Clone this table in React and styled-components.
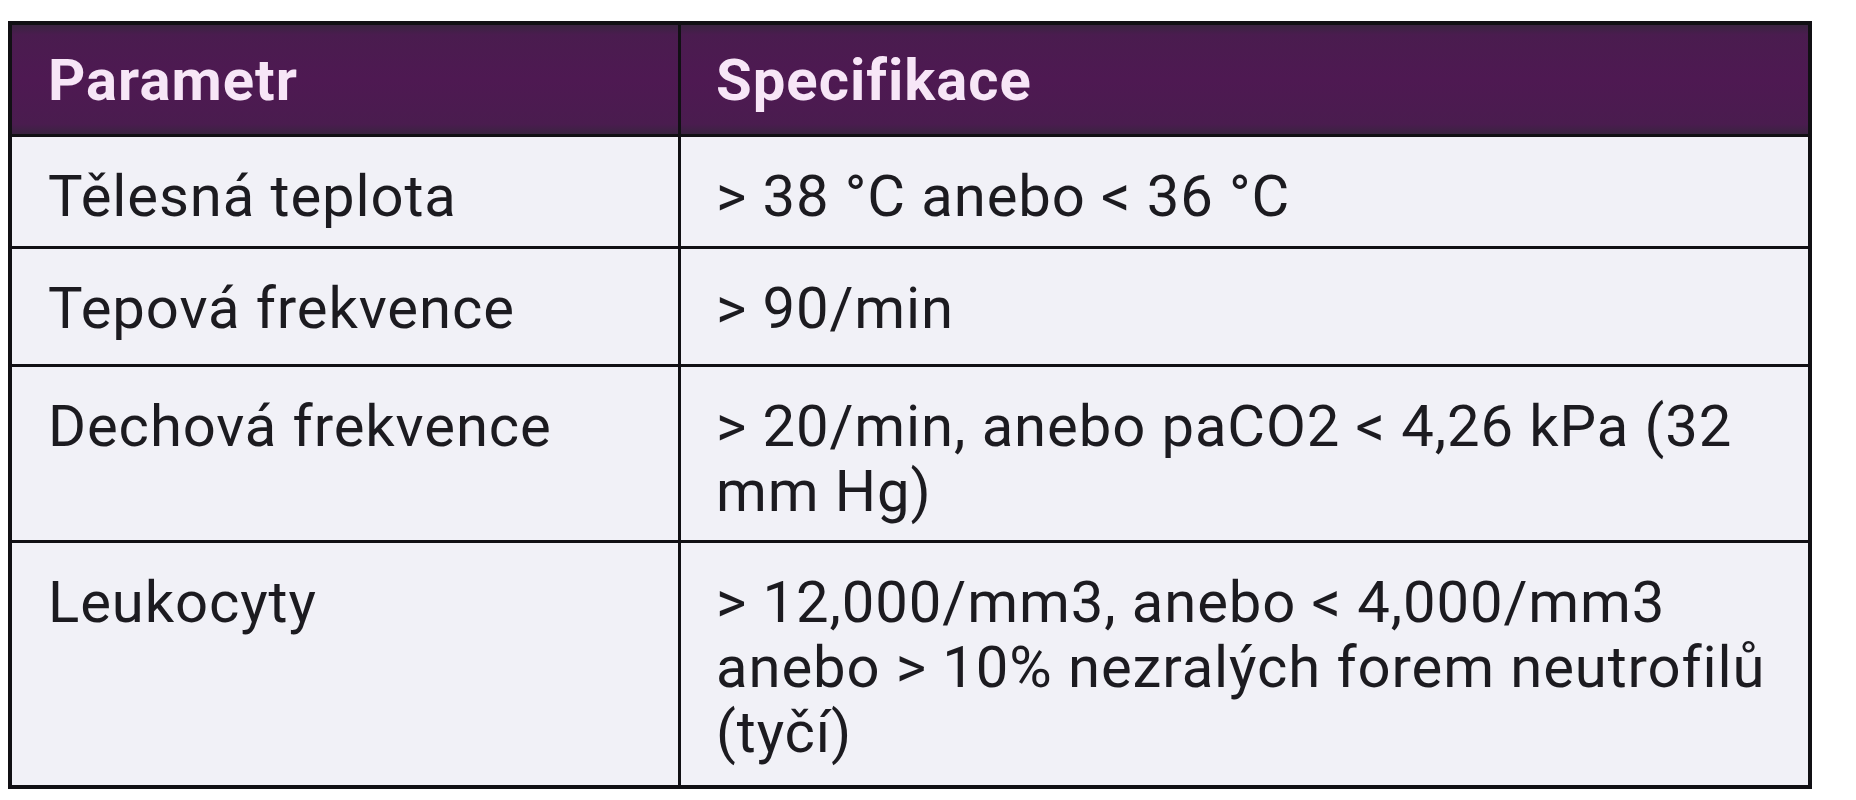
import React from 'react'
import styled, { createGlobalStyle } from 'styled-components'

const GlobalStyle = createGlobalStyle`
  html, body {
    margin: 0;
    padding: 0;
    background: #ffffff;
  }
  * {
    box-sizing: border-box;
  }
`

const Page = styled.div`
  padding: 21px 0 0 8px;
  font-family: Roboto, "Liberation Sans", sans-serif;
`

const Table = styled.div`
  width: 1804px;
  border: 4px solid #111014;
`

const HeadRow = styled.div`
  display: grid;
  grid-template-columns: 669px 1fr;
  height: 109px;
  background: linear-gradient(
    to bottom,
    #3a2340 0px,
    #4a1c4f 10px,
    #4e1952 50%,
    #4a1c4f calc(100% - 10px),
    #3a2340 100%
  );
`

const HeadCell = styled.div`
  display: flex;
  align-items: center;
  padding-left: ${(p) => (p.$first ? 36 : 35)}px;
  border-right: ${(p) => (p.$first ? '3px solid #111014' : 'none')};
  color: #f7e6f7;
  font-size: 58px;
  font-weight: 700;
  letter-spacing: 1px;
  line-height: 64px;
`

const Row = styled.div`
  display: grid;
  grid-template-columns: 669px 1fr;
  height: ${(p) => p.$height}px;
  border-top: 3px solid #111014;
  background: #f1f1f7;
`

const Cell = styled.div`
  padding: 27px 0 0 ${(p) => (p.$first ? 36 : 35)}px;
  border-right: ${(p) => (p.$first ? '3px solid #111014' : 'none')};
  color: #1c1b20;
  font-size: 58px;
  font-weight: 400;
  letter-spacing: 0.9px;
  line-height: 65px;
  white-space: nowrap;
`

const rows = [
  { name: 'Tělesná teplota', value: ['> 38 °C anebo < 36 °C'], height: 112 },
  { name: 'Tepová frekvence', value: ['> 90/min'], height: 118 },
  {
    name: 'Dechová frekvence',
    value: ['> 20/min, anebo paCO2 < 4,26 kPa (32', 'mm Hg)'],
    height: 176,
  },
  {
    name: 'Leukocyty',
    value: [
      '> 12,000/mm3, anebo < 4,000/mm3',
      'anebo > 10% nezralých forem neutrofilů',
      '(tyčí)',
    ],
    height: 245,
  },
]

const App = () => {
  return (
    <>
      <GlobalStyle />
      <Page>
        <Table>
          <HeadRow>
            <HeadCell $first>Parametr</HeadCell>
            <HeadCell>Specifikace</HeadCell>
          </HeadRow>
          {rows.map((row) => (
            <Row key={row.name} $height={row.height}>
              <Cell $first>{row.name}</Cell>
              <Cell>
                {row.value.map((line, i) => (
                  <React.Fragment key={i}>
                    {i > 0 && <br />}
                    {line}
                  </React.Fragment>
                ))}
              </Cell>
            </Row>
          ))}
        </Table>
      </Page>
    </>
  )
}

export default App
